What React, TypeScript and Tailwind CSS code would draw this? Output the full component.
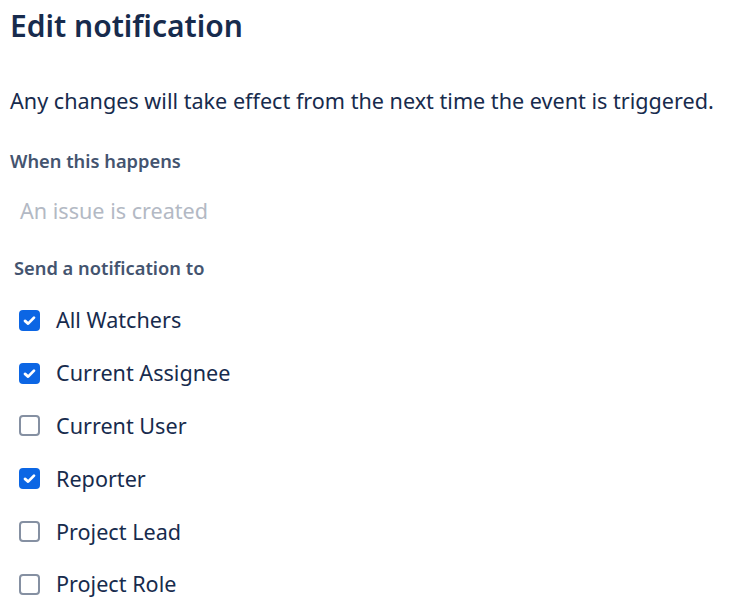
const recipients = [
  { name: 'All Watchers', checked: true },
  { name: 'Current Assignee', checked: true },
  { name: 'Current User', checked: false },
  { name: 'Reporter', checked: true },
  { name: 'Project Lead', checked: false },
  { name: 'Project Role', checked: false },
];

function Checkbox({ checked }: { checked: boolean }) {
  if (checked) {
    return (
      <span className="flex h-[21px] w-[21px] items-center justify-center rounded-[4px] bg-[#0c66e4]">
        <svg width="15" height="15" viewBox="0 0 12 12">
          <path d="M2.4 6.3 L4.9 8.5 L9.6 3.7" fill="none" stroke="#ffffff" strokeWidth="2.2" strokeLinecap="round" strokeLinejoin="round" />
        </svg>
      </span>
    );
  }
  return <span className="h-[21px] w-[21px] rounded-[4px] border-2 border-[#8590a2] bg-white" />;
}

export default function App() {
  return (
    <div className="min-h-screen bg-white px-[10px] text-[#172b4d]" style={{ fontFamily: '"Noto Sans", "Open Sans", sans-serif' }}>
      <h1 className="h-[52px] text-[30px] font-semibold leading-[52px] text-[#172b4d]">Edit notification</h1>

      <p className="mt-[36px] h-[26px] text-[21.6px] leading-[26px]">
        Any changes will take effect from the next time the event is triggered.
      </p>

      <div className="mt-[35px] h-[24px] text-[18.3px] font-semibold leading-[24px] text-[#44546f]">When this happens</div>
      <div className="mt-[24px] h-[28px] pl-[10px] text-[21.6px] leading-[28px] text-[#b3b9c4]">An issue is created</div>

      <div className="mt-[31px] h-[24px] pl-[4px] text-[18.3px] font-semibold leading-[24px] text-[#44546f]">Send a notification to</div>

      <ul className="mt-[14px]">
        {recipients.map(r => (
          <li key={r.name} className="flex h-[52.8px] items-center gap-[16px] pl-[9px]">
            <Checkbox checked={r.checked} />
            <span className="text-[21.6px] leading-[28px]">{r.name}</span>
          </li>
        ))}
      </ul>
    </div>
  );
}
